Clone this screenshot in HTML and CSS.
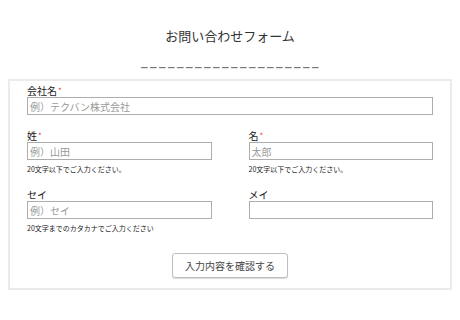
FILE: index.html
```html
<!DOCTYPE html>
<html lang="ja">
<head>
  <meta charset="UTF-8" />
  <meta name="viewport" content="width=device-width, initial-scale=1.0" />
  <title>お問い合わせフォーム</title>
  <link rel="stylesheet" href="styles.css">
</head>
<body>
  <header class="page-head">
    <h1>お問い合わせフォーム</h1>
    <p class="rule">____________________</p>
  </header>

  <form class="contact-form">
    <div class="field field-wide">
      <label for="company">会社名<span class="req">*</span></label>
      <input type="text" id="company" placeholder="例）テクバン株式会社" />
    </div>

    <div class="row row-name">
      <div class="field">
        <label for="sei">姓<span class="req">*</span></label>
        <input type="text" id="sei" placeholder="例）山田" />
        <p class="note">20文字以下でご入力ください。</p>
      </div>
      <div class="field">
        <label for="mei">名<span class="req">*</span></label>
        <input type="text" id="mei" placeholder="太郎" />
        <p class="note">20文字以下でご入力ください。</p>
      </div>
    </div>

    <div class="row">
      <div class="field">
        <label for="seikana">セイ</label>
        <input type="text" id="seikana" placeholder="例）セイ" />
        <p class="note">20文字までのカタカナでご入力ください</p>
      </div>
      <div class="field">
        <label for="meikana">メイ</label>
        <input type="text" id="meikana" />
      </div>
    </div>

    <div class="actions">
      <button type="button" class="confirm-button">入力内容を確認する</button>
    </div>
  </form>
</body>
</html>
```

FILE: styles.css
```css
body {
  font-family: "Noto Sans CJK JP", "Liberation Sans", sans-serif;
  background-color: #fff;
  margin: 8px;
  color: #222;
}
.page-head {
  text-align: center;
  padding-top: 13px;
}
.page-head h1 {
  margin: 0;
  font-size: 13px;
  font-weight: 400;
  line-height: 30px;
  color: #333;
}
.rule {
  margin: 0 0 8px;
  font-family: "DejaVu Sans", sans-serif;
  font-size: 13px;
  font-weight: 700;
  letter-spacing: 2.5px;
  line-height: 20px;
  color: #777;
  padding-left: 2px;
}
.contact-form {
  margin-top: 0;
  border: 2px solid #ebebeb;
  padding: 4px 17px 10px 17px;
}
.field label {
  display: block;
  font-size: 10px;
  line-height: 11px;
  margin-bottom: 1px;
  color: #1a1a1a;
}
.req {
  color: #e53935;
  font-size: 8px;
  vertical-align: top;
  margin-left: 1px;
}
.field input {
  display: block;
  box-sizing: border-box;
  width: 100%;
  height: 18px;
  margin: 0;
  padding: 0 2px;
  border: 1px solid #adadad;
  border-radius: 0;
  font-family: "Noto Sans CJK JP", sans-serif;
  font-size: 10px;
  color: #555;
}
.field input::placeholder {
  color: #999;
}
.field-wide {
  margin-bottom: 15px;
}
.row {
  display: grid;
  grid-template-columns: 1fr 1fr;
  column-gap: 37px;
  margin-bottom: 13px;
}
.row-name {
  margin-bottom: 15px;
}
.note {
  margin: 4px 0 0;
  font-size: 7px;
  line-height: 10px;
  color: #222;
}
.actions {
  display: flex;
  justify-content: center;
  padding-top: 7px;
}
.confirm-button {
  width: 116px;
  height: 25px;
  padding: 0;
  background: #fff;
  border: 1px solid #bdbdbd;
  border-radius: 3px;
  box-shadow: 0 1px 1px rgba(0,0,0,0.15);
  font-family: "Noto Sans CJK JP", sans-serif;
  font-size: 10px;
  color: #444;
  cursor: pointer;
}
```
